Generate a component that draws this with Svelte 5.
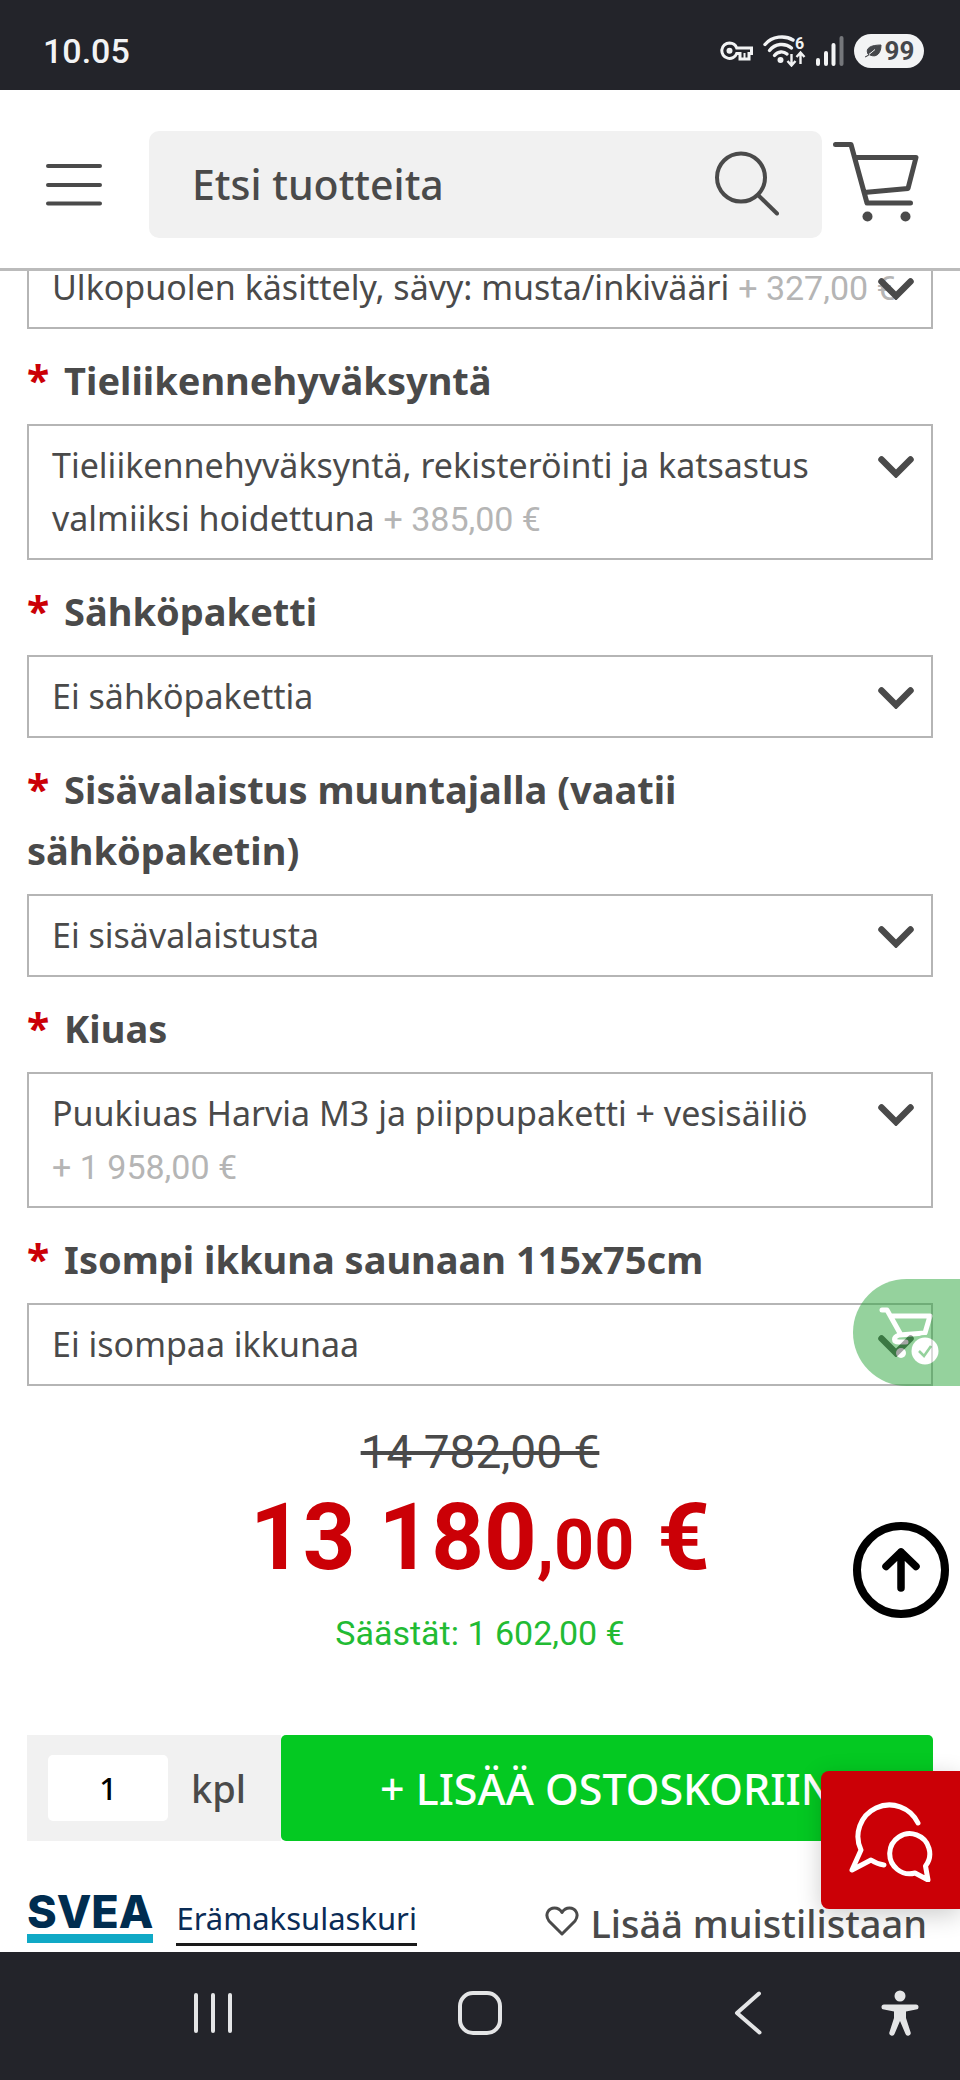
<script lang="ts">
  type Option = { name: string; price?: string };
  type Field = { id: string; label: string; options: Option[]; selected: number };

  let fields: Field[] = $state([
    {
      id: 'tieliikenne',
      label: 'Tieliikennehyväksyntä',
      options: [{ name: 'Tieliikennehyväksyntä, rekisteröinti ja katsastus valmiiksi hoidettuna', price: '+ 385,00 €' }],
      selected: 0
    },
    { id: 'sahkopaketti', label: 'Sähköpaketti', options: [{ name: 'Ei sähköpakettia' }], selected: 0 },
    {
      id: 'sisavalaistus',
      label: 'Sisävalaistus muuntajalla (vaatii sähköpaketin)',
      options: [{ name: 'Ei sisävalaistusta' }],
      selected: 0
    },
    {
      id: 'kiuas',
      label: 'Kiuas',
      options: [{ name: 'Puukiuas Harvia M3 ja piippupaketti + vesisäiliö', price: '+ 1 958,00 €' }],
      selected: 0
    },
    { id: 'ikkuna', label: 'Isompi ikkuna saunaan 115x75cm', options: [{ name: 'Ei isompaa ikkunaa' }], selected: 0 }
  ]);

  let outside: Field = $state({
    id: 'ulkopuoli',
    label: 'Ulkopuolen käsittely',
    options: [{ name: 'Ulkopuolen käsittely, sävy: musta/inkivääri', price: '+ 327,00 €' }],
    selected: 0
  });

  let search = $state('');
  let amount = $state('1');

  function toTop() {
    window.scrollTo({ top: 0, behavior: 'smooth' });
  }
</script>

<svelte:head>
  <title>Tuote</title>
</svelte:head>

{#snippet dropdown(field: Field)}
  <div class="dropdown">
    <span class="value" aria-hidden="true">
      {field.options[field.selected].name}
      {#if field.options[field.selected].price}
        <span class="extra">{field.options[field.selected].price}</span>
      {/if}
    </span>
    <svg class="chevron" width="36" height="22" viewBox="0 0 36 22" aria-hidden="true">
      <path d="M3.5 3.5 18 18 32.5 3.5" fill="none" stroke="#4a4a4a" stroke-width="6.5" stroke-linecap="round" />
    </svg>
    <select id={field.id} aria-label={field.label} bind:value={field.selected}>
      {#each field.options as option, i}
        <option value={i}>{option.name} {option.price ?? ''}</option>
      {/each}
    </select>
  </div>
{/snippet}

<div class="screen">
  <div class="status">
    <time>10.05</time>
    <div class="status-icons">
      <svg width="33" height="20" viewBox="0 0 33 20">
        <path d="M9.5 2a7.7 7.7 0 1 0 7.2 10.5H20V18h9v-5.500h2.500V7H16.700A7.700 7.700 0 0 0 9.500 2Z" fill="none" stroke="#f2f3f4" stroke-width="3" />
        <circle cx="9.500" cy="9.700" r="3" fill="#f2f3f4" />
        <path d="M24.500 12v6" stroke="#f2f3f4" stroke-width="2" />
      </svg>
      <svg width="43" height="32" viewBox="0 0 43 32">
        <g fill="none" stroke="#f2f3f4" stroke-width="3.400" stroke-linecap="round">
          <path d="M2 9.500C9 1 22 0 30 5" />
          <path d="M6.500 15.500C12 8.500 22 7.500 28.500 13" />
          <path d="M11.500 20.500C15 16 20.500 16 24 19" />
        </g>
        <circle cx="17.500" cy="25" r="3" fill="#f2f3f4" />
        <path d="M28.500 19v11m-4-4 4 4.500 4-4.500M37.500 29V18m-4 4 4-4.500 4 4.500" fill="none" stroke="#f2f3f4" stroke-width="2.400" />
        <text x="32" y="14" font-size="16" font-weight="700" fill="#f2f3f4">6</text>
      </svg>
      <svg width="28" height="30" viewBox="0 0 28 30">
        <g stroke="#f2f3f4" stroke-width="4" stroke-linecap="round">
          <path d="M2 24v4M10 17v11M17.500 9v19" />
          <path d="M25.500 2v26" stroke="#75777b" />
        </g>
      </svg>
      <span class="battery">
        <svg width="18" height="14" viewBox="0 0 18 14">
          <path d="M1 13C4 12 6 10 9 7M4 10C1 4 7 1 17 1c0 8-4 13-11 10Z" fill="#45474b" stroke="#45474b" stroke-width="1" />
          <path d="M5 10.500 11 5.500" stroke="#f2f3f4" stroke-width="1" />
        </svg>
        99
      </span>
    </div>
  </div>

  <header>
    <button class="icon menu" aria-label="Valikko">
      <svg width="56" height="42" viewBox="0 0 56 42">
        <path d="M2 2h52M2 21h52M2 39.500h52" stroke="#4a4a4a" stroke-width="4" stroke-linecap="round" />
      </svg>
    </button>
    <form class="search" onsubmit={(e) => e.preventDefault()}>
      <input type="text" bind:value={search} placeholder="Etsi tuotteita" aria-label="Etsi tuotteita" />
      <button class="icon" aria-label="Hae">
        <svg width="64" height="68" viewBox="0 0 64 68">
          <circle cx="26" cy="26.500" r="24" fill="none" stroke="#4a4a4a" stroke-width="4" />
          <path d="M43.500 44.500 62 62.500" stroke="#4a4a4a" stroke-width="4" stroke-linecap="round" />
        </svg>
      </button>
    </form>
    <button class="icon" aria-label="Ostoskori">
      <svg width="86" height="88" viewBox="0 0 86 88">
        <path d="M2.500 3.500H18L34 62h43.500M23 16.500h60L75 47.500 31 51.500" fill="none" stroke="#4a4a4a" stroke-width="5" stroke-linecap="round" stroke-linejoin="round" />
        <circle cx="34.500" cy="75.500" r="5" fill="#4a4a4a" />
        <circle cx="72.500" cy="75.500" r="5" fill="#4a4a4a" />
      </svg>
    </button>
  </header>

  <main>
    <div class="options">
      {@render dropdown(outside)}
      {#each fields as field (field.id)}
        <label for={field.id}><span class="required">*</span> {field.label}</label>
        {@render dropdown(field)}
      {/each}
    </div>

    <div class="prices">
      <s>14 782,00 €</s>
      <strong>13 180<small>,00</small> €</strong>
      <span class="saving">Säästät: 1 602,00 €</span>
    </div>

    <div class="buy">
      <label class="amount"><input type="text" inputmode="numeric" bind:value={amount} /> kpl</label>
      <button class="add">+ LISÄÄ OSTOSKORIIN</button>
    </div>

    <div class="links">
      <span class="svea">SVEA</span>
      <a class="calculator" href="#eramaksu">Erämaksulaskuri</a>
      <a class="wishlist" href="#muistilista">
        <svg width="34" height="34" viewBox="0 0 34 34">
          <path d="M17 28 4 15C-1 8 4 2 9.500 2 13 2 15.500 4 17 6.500 18.500 4 21 2 24.500 2 30 2 35 8 30 15Z" fill="none" stroke="#4a4a4a" stroke-width="3" stroke-linejoin="round" />
        </svg>
        Lisää muistilistaan
      </a>
    </div>

    <button class="float quick-cart" aria-label="Siirry kassalle">
      <svg width="60" height="58" viewBox="0 0 60 58">
        <g fill="none" stroke="#fff" stroke-width="5" stroke-linecap="round" stroke-linejoin="round">
          <path d="M3 3h5L22 28M12 9h39L46 26 20 28c-6 2-6 7 0 7h7" />
        </g>
        <circle cx="22" cy="46" r="5" fill="#fff" />
        <circle cx="46" cy="44" r="16" fill="#2da73d" />
        <circle cx="46" cy="44" r="13.500" fill="#fff" />
        <path d="m40 44 5 5 7-10" fill="none" stroke="#2da73d" stroke-width="2.500" />
      </svg>
    </button>
    <button class="float to-top" aria-label="Takaisin ylös" onclick={toTop}>
      <svg width="96" height="96" viewBox="0 0 96 96">
        <circle cx="48" cy="48" r="44" fill="#fff" stroke="#000" stroke-width="8" />
        <path d="M48 66V30M33 44.500 48 30l15 14.500" fill="none" stroke="#000" stroke-width="7.500" stroke-linecap="round" stroke-linejoin="round" />
      </svg>
    </button>
    <button class="float chat" aria-label="Chat">
      <svg width="84" height="84" viewBox="0 0 84 84">
        <g fill="none" stroke="#fff" stroke-width="5" stroke-linecap="round" stroke-linejoin="round">
          <path d="M69 25A31.500 31.500 0 1 0 12 52L3 72 22 62Q28 66 35 67" />
          <path d="M76.500 68A20 20 0 1 0 66 75L79 82Z" />
        </g>
      </svg>
    </button>
  </main>

  <nav>
    <button class="icon" aria-label="Viimeisimmät">
      <svg width="40" height="42" viewBox="0 0 40 42">
        <path d="M3 3v36M20 3v36M37 3v36" stroke="#e4e5e6" stroke-width="4" stroke-linecap="round" />
      </svg>
    </button>
    <button class="icon" aria-label="Koti">
      <svg width="44" height="44" viewBox="0 0 44 44">
        <rect x="2" y="2" width="40" height="40" rx="13" fill="none" stroke="#e4e5e6" stroke-width="4" />
      </svg>
    </button>
    <button class="icon" aria-label="Takaisin">
      <svg width="28" height="44" viewBox="0 0 28 44">
        <path d="M25 2.500 3 22l22.500 19.500" fill="none" stroke="#e4e5e6" stroke-width="4" stroke-linecap="round" stroke-linejoin="round" />
      </svg>
    </button>
    <button class="icon" aria-label="Esteettömyys">
      <svg width="38" height="46" viewBox="0 0 38 46">
        <circle cx="19" cy="6" r="5.500" fill="#e4e5e6" />
        <path d="M3 14.500h32a2.500 2.500 0 0 1 0 5L25 21.500V28L29.500 42a2.500 2.500 0 0 1-5 2L19 31 13.500 44a2.500 2.500 0 0 1-5-2L13 28V21.500L3 19.500a2.500 2.500 0 0 1 0-5Z" fill="#e4e5e6" />
      </svg>
    </button>
  </nav>
</div>

<style>
  :global(body) { background: #fff; }
  .screen { display: flex; flex-direction: column; min-height: 100vh; color: #4a4a4a; font: 500 34px/53px "Noto Sans", sans-serif; }
  button, input, select { font: inherit; color: inherit; }
  button { border: 0; padding: 0; cursor: pointer; }
  svg { display: block; flex: none; }
  .icon { display: flex; background: none; }

  .status { display: flex; justify-content: space-between; align-items: center; height: 90px; padding: 12px 36px 0 43px; box-sizing: border-box; background: #23242a; color: #f2f3f4; font-family: Roboto, sans-serif; }
  .status-icons { display: flex; align-items: center; gap: 10px; }
  .battery { display: flex; align-items: center; justify-content: center; gap: 3px; width: 70px; height: 34px; border-radius: 17px; background: #f2f3f4; color: #45474b; font-size: 26px; font-weight: 700; line-height: 34px; }

  header { display: flex; align-items: center; height: 181px; padding: 11px 41px 0 46px; box-sizing: border-box; border-bottom: 3px solid #bbb; }
  .search { display: flex; flex: 1; align-items: center; min-width: 0; height: 107px; margin: 0 11px 0 47px; padding: 0 43px; box-sizing: border-box; border-radius: 10px; background: #f1f1f1; }
  .search input { flex: 1; min-width: 0; padding: 0; border: 0; outline: 0; background: none; font-size: 41px; }
  .search input::placeholder { color: #4a4a4a; opacity: 1; }

  main { position: relative; flex: 1; overflow: hidden; padding: 0 27px; }
  .options { display: flex; flex-direction: column; margin-top: -25px; }
  .options label { margin: 21px 0 13px; font-size: 38px; font-weight: 700; line-height: 61px; }
  .required { margin-right: 5px; color: #cb0006; font-size: 41px; line-height: 1; }
  .dropdown { display: grid; border: 2px solid #b5b5b5; }
  .dropdown > * { grid-area: 1 / 1; }
  .value { padding: 13px 23px; font-weight: 400; }
  .extra { color: #b5b5b5; font-family: Roboto, sans-serif; line-height: 1; white-space: nowrap; }
  .chevron { justify-self: end; margin: 30px 17px 0 0; }
  .dropdown select { width: 100%; height: 100%; opacity: 0; }

  .prices { display: flex; flex-direction: column; align-items: center; margin-top: 36px; font-family: Roboto, sans-serif; font-weight: 400; }
  .prices s { font-size: 46px; line-height: 60px; }
  .prices strong { color: #cb0006; font-size: 92px; line-height: 112px; }
  .prices small { font-size: 70px; line-height: 1; }
  .saving { margin-top: 13px; color: #22bb33; }

  .buy { display: flex; height: 106px; margin-top: 75px; }
  .amount { display: flex; align-items: center; gap: 23px; width: 254px; padding-left: 21px; box-sizing: border-box; background: #f1f1f1; font-size: 38px; }
  .amount input { width: 120px; height: 66px; padding: 0; border: 0; border-radius: 5px; background: #fff; color: #000; font-size: 31px; text-align: center; }
  .add { flex: 1; border-radius: 5px; background: #04c922; color: #fff; font-size: 43px; }

  .links { display: flex; align-items: flex-start; margin-top: 53px; }
  .svea { padding-bottom: 4px; border-bottom: 9px solid #10a9c6; color: #002d50; font: 800 45px/36px Inter, sans-serif; }
  .calculator { margin: 5px 0 0 23px; padding-bottom: 5px; border-bottom: 3px solid #1a1a1a; color: #0a2c56; font-size: 31px; font-weight: 400; line-height: 39px; text-decoration: none; }
  .wishlist { display: flex; align-items: center; gap: 11px; margin-left: auto; padding-right: 6px; color: inherit; font-size: 38px; line-height: 58px; text-decoration: none; white-space: nowrap; }

  .float { position: absolute; display: flex; align-items: center; justify-content: center; }
  .quick-cart { right: 0; bottom: 566px; width: 107px; height: 107px; padding: 6px 0 0 5px; border-radius: 54px 0 0 54px; background: #2da73d; opacity: 0.5; }
  .to-top { right: 11px; bottom: 334px; border-radius: 50%; background: none; }
  .chat { right: 0; bottom: 43px; width: 139px; height: 138px; border-radius: 8px 0 0 8px; background: #cb0006; box-shadow: 0 6px 24px rgba(0, 0, 0, 0.2); }

  nav { display: grid; grid-template-columns: 1fr 1fr 1fr 36px; place-items: center; height: 128px; padding: 0 42px 6px 79px; box-sizing: border-box; background: #23242a; }
</style>
